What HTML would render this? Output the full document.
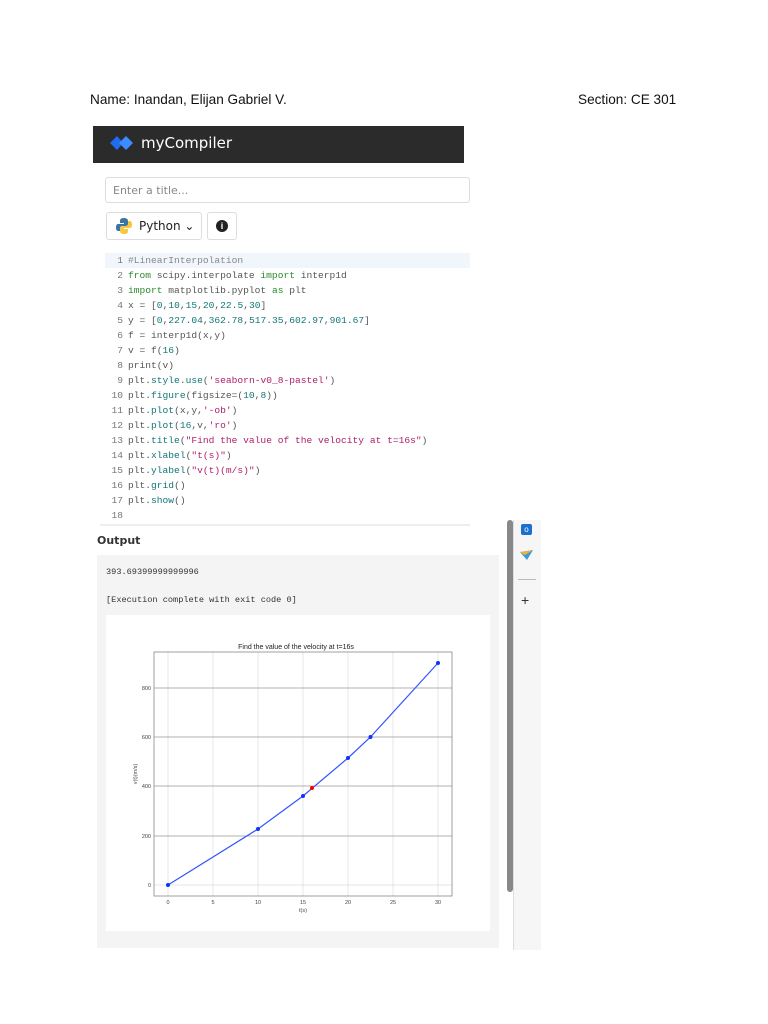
<!DOCTYPE html>
<html><head><style>
body{margin:0;width:768px;height:1024px;background:#fff;position:relative;font-family:"Liberation Sans",sans-serif;overflow:hidden}
.a{position:absolute}
.code{font-family:"Liberation Mono",monospace;font-size:9.6px;color:#555;white-space:pre;line-height:15px}
.k{color:#708}.g{color:#2a8a2a}.n{color:#177}.s{color:#b0206a}.c{color:#888}.ln{color:#777;display:inline-block;width:18px;text-align:right;margin-right:5px}
</style></head><body>
<div class="a" style="left:90px;top:92px;font-size:13.6px;color:#111">Name: Inandan, Elijan Gabriel V.</div>
<div class="a" style="left:578px;top:92px;font-size:13.6px;color:#111">Section: CE 301</div>

<div class="a" style="left:93px;top:126px;width:371px;height:37px;background:#2b2b2b"></div>
<svg class="a" style="left:110px;top:134px" width="24" height="18" viewBox="0 0 24 18"><path d="M0 9L7 2L13 9L7 16Z" fill="#1e6cf0"/><path d="M9 9L16 2L23 9L16 16Z" fill="#3b8cff"/></svg>
<div class="a" style="left:141px;top:134px;font-size:15px;color:#fff;font-family:'DejaVu Sans',sans-serif">myCompiler</div>

<div class="a" style="left:105px;top:177px;width:365px;height:26px;border:1px solid #ddd;border-radius:3px;box-sizing:border-box"></div>
<div class="a" style="left:113px;top:184px;font-size:11px;color:#888;font-family:'DejaVu Sans',sans-serif">Enter a title...</div>
<div class="a" style="left:106px;top:212px;width:96px;height:28px;border:1px solid #ddd;border-radius:3px;box-sizing:border-box"></div>
<svg class="a" style="left:115px;top:217px" width="18" height="18" viewBox="0 0 18 18"><path d="M9 1C5 1 5 3 5 4V6H9V7H3C1 7 1 10 1 11C1 14 3 14 4 14H5V11C5 10 6 9 7 9H11C12 9 13 8 13 7V4C13 2 11 1 9 1Z" fill="#3a74a8"/><path d="M9 17C13 17 13 15 13 14V12H9V11H15C17 11 17 8 17 7C17 4 15 4 14 4H13V7C13 8 12 9 11 9H7C6 9 5 10 5 11V14C5 16 7 17 9 17Z" fill="#f7c83b"/></svg>
<div class="a" style="left:139px;top:219px;font-size:12px;color:#222;font-family:'DejaVu Sans',sans-serif">Python ⌄</div>
<div class="a" style="left:207px;top:212px;width:30px;height:28px;border:1px solid #ddd;border-radius:3px;box-sizing:border-box"></div>
<div class="a" style="left:216px;top:220px;width:12px;height:12px;border-radius:50%;background:#222;color:#fff;font-size:9px;font-weight:bold;text-align:center;line-height:12px">i</div>

<div class="a" style="left:100px;top:250px;width:370px;height:274px;border-bottom:2px solid #eee"></div>
<div class="a" style="left:105px;top:253px;width:365px;height:15px;background:#f0f6fc"></div>
<div class="a code" style="left:105px;top:253px"><span class="ln">1</span><span class="c">#LinearInterpolation</span>
<span class="ln">2</span><span class="g">from</span> scipy.interpolate <span class="g">import</span> interp1d
<span class="ln">3</span><span class="g">import</span> matplotlib.pyplot <span class="g">as</span> plt
<span class="ln">4</span>x = [<span class="n">0</span>,<span class="n">10</span>,<span class="n">15</span>,<span class="n">20</span>,<span class="n">22.5</span>,<span class="n">30</span>]
<span class="ln">5</span>y = [<span class="n">0</span>,<span class="n">227.04</span>,<span class="n">362.78</span>,<span class="n">517.35</span>,<span class="n">602.97</span>,<span class="n">901.67</span>]
<span class="ln">6</span>f = interp1d(x,y)
<span class="ln">7</span>v = f(<span class="n">16</span>)
<span class="ln">8</span>print(v)
<span class="ln">9</span>plt.<span class="n">style</span>.<span class="n">use</span>(<span class="s">'seaborn-v0_8-pastel'</span>)
<span class="ln">10</span>plt.<span class="n">figure</span>(figsize=(<span class="n">10</span>,<span class="n">8</span>))
<span class="ln">11</span>plt.<span class="n">plot</span>(x,y,<span class="s">'-ob'</span>)
<span class="ln">12</span>plt.<span class="n">plot</span>(<span class="n">16</span>,v,<span class="s">'ro'</span>)
<span class="ln">13</span>plt.<span class="n">title</span>(<span class="s">"Find the value of the velocity at t=16s"</span>)
<span class="ln">14</span>plt.<span class="n">xlabel</span>(<span class="s">"t(s)"</span>)
<span class="ln">15</span>plt.<span class="n">ylabel</span>(<span class="s">"v(t)(m/s)"</span>)
<span class="ln">16</span>plt.<span class="n">grid</span>()
<span class="ln">17</span>plt.<span class="n">show</span>()
<span class="ln">18</span></div>

<div class="a" style="left:97px;top:534px;font-size:11px;font-weight:bold;color:#333;font-family:'DejaVu Sans',sans-serif">Output</div>
<div class="a" style="left:97px;top:555px;width:402px;height:393px;background:#f4f4f4"></div>
<div class="a code" style="left:106px;top:565px;color:#333;font-size:8.6px;line-height:14px">393.69399999999996

[Execution complete with exit code 0]</div>
<div class="a" style="left:106px;top:615px;width:384px;height:316px;background:#fff"></div>
<div class="a" style="left:507px;top:520px;width:6px;height:372px;background:#888;border-radius:3px"></div>
<div class="a" style="left:513px;top:520px;width:27px;height:430px;background:#f6f6f6;border-left:1px solid #ddd"></div>
<div class="a" style="left:521px;top:524px;width:11px;height:11px;background:#1a6fd0;border-radius:2px;color:#fff;font-size:8px;text-align:center;line-height:11px">o</div>
<svg class="a" style="left:520px;top:550px" width="13" height="11"><path d="M0 2L13 0L7 10Z" fill="#3a9ad9"/><path d="M0 2L13 0L5 5Z" fill="#f2b233"/></svg>
<div class="a" style="left:518px;top:579px;width:18px;height:1px;background:#bbb"></div>
<div class="a" style="left:521px;top:592px;font-size:14px;color:#333">+</div>

<svg class="a" style="left:106px;top:615px" width="384" height="316" font-family="Liberation Sans" font-size="5.5" fill="#444">
<g transform="translate(-106,-615)">
<text x="296" y="649" text-anchor="middle" font-size="7" fill="#222">Find the value of the velocity at t=16s</text>
<g stroke="#ddd" stroke-width="0.7">
<line x1="168" y1="652" x2="168" y2="896"/><line x1="213" y1="652" x2="213" y2="896"/><line x1="258" y1="652" x2="258" y2="896"/><line x1="303" y1="652" x2="303" y2="896"/><line x1="348" y1="652" x2="348" y2="896"/><line x1="393" y1="652" x2="393" y2="896"/><line x1="438" y1="652" x2="438" y2="896"/>
<line x1="154" y1="885" x2="452" y2="885"/></g>
<g stroke="#999" stroke-width="0.8"><line x1="154" y1="688" x2="452" y2="688"/><line x1="154" y1="737" x2="452" y2="737"/><line x1="154" y1="786" x2="452" y2="786"/><line x1="154" y1="836" x2="452" y2="836"/></g>
<rect x="154" y="652" width="298" height="244" fill="none" stroke="#888" stroke-width="0.8"/>
<polyline points="168,885 258,829 303,796 348,758 370.5,737 438,663" fill="none" stroke="#3355ff" stroke-width="1.2"/>
<g fill="#1030ff"><circle cx="168" cy="885" r="2"/><circle cx="258" cy="829" r="2"/><circle cx="303" cy="796" r="2"/><circle cx="348" cy="758" r="2"/><circle cx="370.5" cy="737" r="2"/><circle cx="438" cy="663" r="2"/></g>
<circle cx="312" cy="788" r="2" fill="#f00"/>
<g text-anchor="end"><text x="151" y="690">800</text><text x="151" y="739">600</text><text x="151" y="788">400</text><text x="151" y="838">200</text><text x="151" y="887">0</text></g>
<g text-anchor="middle"><text x="168" y="904">0</text><text x="213" y="904">5</text><text x="258" y="904">10</text><text x="303" y="904">15</text><text x="348" y="904">20</text><text x="393" y="904">25</text><text x="438" y="904">30</text><text x="303" y="912">t(s)</text></g>
<text transform="translate(137,774) rotate(-90)" text-anchor="middle">v(t)(m/s)</text>
</g></svg>
</body></html>
